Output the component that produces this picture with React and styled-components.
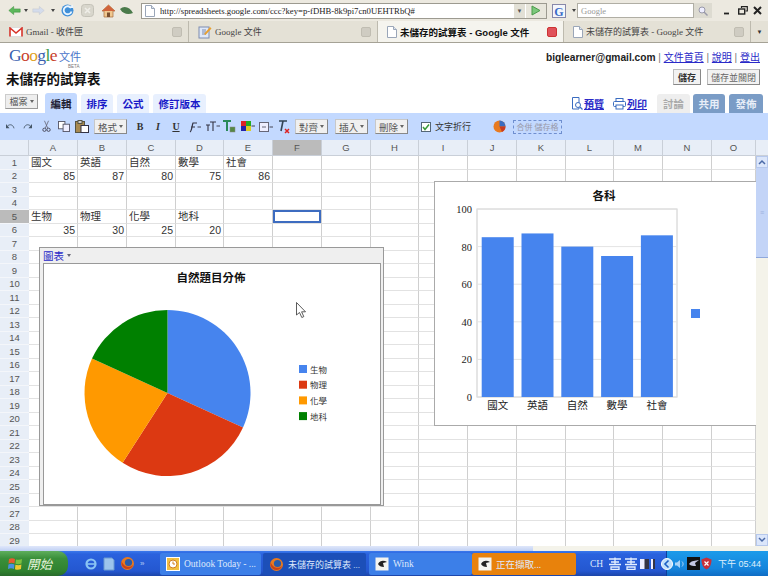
import styled, { createGlobalStyle } from "styled-components";

const CJK = `"Liberation Sans", "Noto Sans CJK TC", sans-serif`;
const SERIF_CJK = `"Liberation Serif", "Noto Sans CJK TC", serif`;

const GlobalStyle = createGlobalStyle`
    html, body { margin: 0; padding: 0; background: #fff; }
    * { box-sizing: border-box; }
    body { font-family: ${CJK}; }
`;

const COLUMNS = [
    ["A", 49], ["B", 49], ["C", 49], ["D", 48], ["E", 49], ["F", 49], ["G", 49], ["H", 48],
    ["I", 49], ["J", 49], ["K", 49], ["L", 48], ["M", 49], ["N", 49], ["O", 44],
];

const CELLS = {
    "1": ["國文", "英語", "自然", "數學", "社會"],
    "2": [85, 87, 80, 75, 86],
    "5": ["生物", "物理", "化學", "地科"],
    "6": [35, 30, 25, 20],
};

const PIE = [
    ["生物", 35, "#4684ee"],
    ["物理", 30, "#dc3912"],
    ["化學", 25, "#ff9900"],
    ["地科", 20, "#008000"],
];

const BARS = [["國文", 85], ["英語", 87], ["自然", 80], ["數學", 75], ["社會", 86]];

// Browser chrome
const Page = styled.div`
    width: 768px;
    height: 576px;
    display: flex;
    flex-direction: column;
    overflow: hidden;
    position: relative;
    background: #fff;
`;

const NavBar = styled.div`
    height: 21px;
    display: flex;
    align-items: center;
    background: #ece9e0;
    padding-left: 5px;
`;

const NavIcon = styled.span`
    display: flex;
    align-items: center;
    justify-content: center;
    width: ${(p) => p.$w || 18}px;
    height: 16px;
    flex: none;
`;

const UrlBox = styled.div`
    width: 406px;
    height: 16px;
    margin-left: 6px;
    display: flex;
    align-items: center;
    flex: none;
    background: #fff;
    border: 1px solid #9c9a90;
`;

const UrlText = styled.span`
    flex: 1;
    margin-left: 2px;
    font: 8.7px "Liberation Serif", serif;
    color: #222;
    white-space: nowrap;
    overflow: hidden;
`;

const UrlDrop = styled.span`
    width: 11px;
    height: 14px;
    display: flex;
    align-items: center;
    justify-content: center;
    background: #e2e0d6;
    font-size: 6px;
    color: #555;
    margin-right: 1px;
`;

const GoButton = styled.span`
    width: 20px;
    height: 14px;
    display: flex;
    align-items: center;
    justify-content: center;
    background: #e8e6dc;
`;

const SearchBox = styled.div`
    width: 117px;
    height: 15px;
    display: flex;
    align-items: center;
    flex: none;
    padding-left: 3px;
    background: #fff;
    border: 1px solid #b0aea4;
    font: 8.5px "Liberation Serif", serif;
    color: #999;
`;

const SearchGo = styled.span`
    width: 18px;
    height: 15px;
    display: flex;
    align-items: center;
    justify-content: center;
    flex: none;
    background: #dddbd1;
    margin-right: 8px;
`;

const WinControl = styled.span`
    width: 15px;
    display: flex;
    align-items: center;
    justify-content: center;
    flex: none;
`;

const TabBar = styled.div`
    height: 22px;
    display: flex;
    background: #e4e1d6;
    border-bottom: 1px solid #a5a296;
`;

const BrowserTab = styled.div`
    width: ${(p) => p.$w}px;
    flex: none;
    display: flex;
    align-items: center;
    padding: 0 6px 0 9px;
    gap: 3px;
    font: ${(p) => (p.$active ? `700 9.5px ${CJK}` : `9px ${SERIF_CJK}`)};
    color: ${(p) => (p.$active ? "#111" : "#444")};
    background: ${(p) => (p.$active ? "#f5f4ee" : "#e4e1d6")};
    border-right: 1px solid #bdbaae;
    white-space: nowrap;
    span:first-of-type { flex: 1; }
`;

const TabClose = styled.span`
    width: 10px;
    height: 10px;
    border-radius: 2px;
    background: ${(p) => (p.$active ? "#e0525a" : "#cfccc2")};
    border: 1px solid ${(p) => (p.$active ? "#c33" : "#c0bdb2")};
`;

const TabOverflow = styled.div`
    flex: 1;
    display: flex;
    align-items: center;
    justify-content: center;
    font-size: 6px;
    color: #333;
`;

// Docs header
const Header = styled.div`
    height: 50px;
    display: flex;
    justify-content: space-between;
    padding: 2px 8px 0 6px;
`;

const Logo = styled.div`
    display: flex;
    align-items: baseline;
    padding-left: 3px;
    position: relative;
    height: 22px;
    font: 17.5px "Liberation Serif", serif;
    letter-spacing: -0.6px;
`;

const LogoLetter = styled.span`
    color: ${(p) => p.$c};
`;

const LogoSuffix = styled.span`
    margin-left: 2px;
    font: 11px ${CJK};
    letter-spacing: 0;
    color: #4a74c9;
`;

const LogoBeta = styled.span`
    position: absolute;
    left: 62px;
    top: 19px;
    font: 4.5px "Liberation Sans", sans-serif;
    letter-spacing: 0;
    color: #777;
`;

const DocTitle = styled.div`
    margin-top: 1px;
    font-size: 13.5px;
    font-weight: 700;
    color: #111;
`;

const HeaderRight = styled.div`
    display: flex;
    flex-direction: column;
    align-items: flex-end;
`;

const UserLine = styled.div`
    margin-top: 4px;
    font-size: 10px;
    color: #777;
    white-space: nowrap;
    b { color: #222; font-size: 10.2px; }
`;

const Link = styled.a`
    color: #2a2ac8;
    text-decoration: underline;
`;

const SaveRow = styled.div`
    margin-top: 5px;
    display: flex;
    gap: 6px;
`;

const SaveButton = styled.div`
    height: 16px;
    padding: 0 ${(p) => p.$pad || 3}px;
    display: flex;
    align-items: center;
    font-size: 9px;
    font-weight: ${(p) => (p.$strong ? 700 : 400)};
    color: ${(p) => (p.$strong ? "#333" : "#666")};
    background: #f2f2f2;
    border: 1px solid #bbb;
    border-right-color: #888;
    border-bottom-color: #888;
`;

// Tab row
const TabRow = styled.div`
    height: 20px;
    display: flex;
    align-items: flex-end;
    padding-left: 5px;
`;

const FileMenu = styled.div`
    width: 33px;
    height: 15px;
    margin: 0 7px 4px 0;
    display: flex;
    align-items: center;
    justify-content: center;
    gap: 2px;
    font-size: 9px;
    color: #555;
    background: #eee;
    border: 1px solid #ccc;
    border-right-color: #999;
    border-bottom-color: #999;
`;

const Caret = styled.i`
    width: 0;
    height: 0;
    border: 2.5px solid transparent;
    border-top: 3px solid ${(p) => p.$c || "#666"};
    border-bottom: 0;
`;

const EditTab = styled.div`
    width: ${(p) => p.$w || 32}px;
    height: ${(p) => (p.$active ? 20 : 19)}px;
    margin-right: 4px;
    display: flex;
    align-items: center;
    justify-content: center;
    font-size: 10.5px;
    font-weight: 700;
    color: ${(p) => (p.$active ? "#223" : "#1a1ac8")};
    background: ${(p) => (p.$active ? "#c3d9ff" : "#e8f0fe")};
    border-radius: 3px 3px 0 0;
`;

const TabSpacer = styled.div`
    flex: 1;
`;

const ActionLink = styled.div`
    height: 19px;
    margin-right: 9px;
    display: flex;
    align-items: center;
    gap: 1px;
    font-size: 10px;
    font-weight: 700;
`;

const SideTab = styled.div`
    width: ${(p) => p.$w || 33}px;
    height: 19px;
    margin-left: ${(p) => p.$ml}px;
    display: flex;
    align-items: center;
    justify-content: center;
    font-size: 10.5px;
    font-weight: 700;
    color: ${(p) => (p.$muted ? "#aaa" : "#e8eef8")};
    background: ${(p) => (p.$muted ? "#eee" : "#7a9cc6")};
    border-radius: 3px 3px 0 0;
`;

const TabEnd = styled.div`
    width: 5px;
`;

// Format toolbar
const Toolbar = styled.div`
    height: 27px;
    display: flex;
    align-items: center;
    padding-left: 1px;
    background: #c3d9ff;
`;

const ToolIcon = styled.span`
    width: 18px;
    height: 18px;
    margin-left: ${(p) => p.$ml || 0}px;
    display: flex;
    align-items: center;
    justify-content: center;
    flex: none;
    font: 700 10px "Liberation Serif", serif;
    color: #333;
`;

const ToolMenu = styled.div`
    width: 33px;
    height: 15px;
    margin-left: ${(p) => p.$ml}px;
    display: flex;
    align-items: center;
    justify-content: center;
    gap: 2px;
    font-size: 9.5px;
    color: #555;
    background: #f0f0f0;
    border: 1px solid #c8c8c8;
    border-right-color: #888;
    border-bottom-color: #888;
    flex: none;
`;

const Wrap = styled.label`
    margin-left: 13px;
    display: flex;
    align-items: center;
    gap: 4px;
    font-size: 9px;
    color: #333;
`;

const CheckBox = styled.span`
    width: 10px;
    height: 10px;
    display: flex;
    align-items: center;
    justify-content: center;
    background: #fff;
    border: 1px solid #567;
`;

const MergeCells = styled.div`
    margin-left: 5px;
    width: 49px;
    height: 14px;
    display: flex;
    align-items: center;
    justify-content: center;
    font-size: 8px;
    color: #99a;
    border: 1px dashed #6f8fd0;
`;

// Sheet
const ColumnBar = styled.div`
    height: 16px;
    display: flex;
    background: #e8eef7;
    border-bottom: 1px solid #c9cfd8;
`;

const Corner = styled.div`
    width: 29px;
    flex: none;
    border-right: 1px solid #c9cfd8;
`;

const ColumnHead = styled.div`
    width: ${(p) => p.$w}px;
    flex: none;
    display: flex;
    align-items: center;
    justify-content: center;
    font-size: 9.5px;
    color: #555;
    background: ${(p) => (p.$on ? "#bbb" : "transparent")};
    border-right: 1px solid #c9cfd8;
`;

const SheetArea = styled.div`
    height: 390px;
    display: flex;
    position: relative;
`;

const SheetGrid = styled.div`
    width: 756px;
    display: grid;
    grid-template-columns: 29px ${COLUMNS.map((c) => `${c[1]}px`).join(" ")};
    grid-auto-rows: 13.5px;
    overflow: hidden;
`;

const RowHead = styled.div`
    display: flex;
    align-items: center;
    justify-content: center;
    font-size: 9.5px;
    color: #555;
    background: ${(p) => (p.$on ? "#bbb" : "#e8eef7")};
    border-bottom: 1px solid #f4f6fa;
`;

const Cell = styled.div`
    padding: 0 2px;
    display: flex;
    align-items: center;
    justify-content: ${(p) => (p.$num ? "flex-end" : "flex-start")};
    font-size: 10.5px;
    line-height: 1;
    color: #333;
    white-space: nowrap;
    border-right: 1px solid #cfcfcf;
    border-bottom: 1px solid #e2e2e2;
    box-shadow: ${(p) => (p.$selected ? "inset 0 0 0 2px #3d6cc0" : "none")};
`;

const VScroll = styled.div`
    width: 12px;
    display: flex;
    flex-direction: column;
    background: #f4f3ea;
`;

const ScrollButton = styled.div`
    height: 12px;
    display: flex;
    align-items: center;
    justify-content: center;
    background: #dbe6fb;
    border: 1px solid #b6c8ec;
`;

const ScrollThumb = styled.div`
    height: 90px;
    display: flex;
    align-items: center;
    justify-content: center;
    background: #c3d4f7;
    border-bottom: 1px solid #8fa8dc;
    color: #9db2de;
    font-size: 7px;
`;

const ScrollTrack = styled.div`
    flex: 1;
`;

const HScroll = styled.div`
    height: 5px;
    display: flex;
    background: #f4f3ea;
`;

const HThumb = styled.div`
    width: 533px;
    background: linear-gradient(#dfe7fa, #c0d0f4);
`;

// Charts lying over the sheet
const PieWindow = styled.div`
    position: absolute;
    left: 39px;
    top: 91px;
    width: 345px;
    height: 259px;
    display: flex;
    flex-direction: column;
    padding: 0 2px 1px 3px;
    background: #efefef;
    border: 1px solid #999;
`;

const PieTitleBar = styled.div`
    height: 15px;
    display: flex;
    align-items: center;
    gap: 3px;
    font-size: 10.5px;
    color: #2a2ac8;
`;

const PieBody = styled.div`
    flex: 1;
    background: #fff;
    border: 1px solid #999;
`;

const BarWindow = styled.div`
    position: absolute;
    left: 434px;
    top: 25px;
    width: 322px;
    height: 245px;
    background: #fff;
    border: 1px solid #aaa;
    border-right: 0;
`;

const Cursor = styled.svg`
    position: absolute;
    left: 296px;
    top: 146px;
`;

// Taskbar
const TaskBar = styled.div`
    height: 25px;
    display: flex;
    align-items: stretch;
    background: linear-gradient(#3a79ec 0, #2a62de 12%, #2457d0 80%, #1c45a8 100%);
`;

const StartButton = styled.div`
    width: 68px;
    flex: none;
    display: flex;
    align-items: center;
    gap: 4px;
    padding-left: 8px;
    font: italic 12.5px ${CJK};
    color: #e6f4dc;
    background: linear-gradient(#5fae5c, #3a8f3a 30%, #2f812f 80%, #286b2b);
    border-radius: 0 10px 10px 0;
`;

const QuickLaunch = styled.div`
    width: 92px;
    flex: none;
    display: flex;
    align-items: center;
    gap: 5px;
    padding-left: 16px;
    color: #b8cdf5;
    font-size: 8px;
`;

const TaskButton = styled.div`
    width: ${(p) => p.$w}px;
    flex: none;
    margin: 2px ${(p) => p.$mr || 0}px 1px 0;
    padding-left: 6px;
    display: flex;
    align-items: center;
    gap: 4px;
    font: ${(p) => p.$fs || 9.5}px ${SERIF_CJK};
    color: #dfe9fb;
    white-space: nowrap;
    overflow: hidden;
    border-radius: 2px;
    background: ${(p) => p.$bg};
`;

const TrayLang = styled.div`
    margin-left: 14px;
    width: 76px;
    flex: none;
    display: flex;
    align-items: center;
    gap: 2px;
    font: 9.5px "Liberation Serif", serif;
    color: #dfe9fb;
`;

const LangCode = styled.span`
    width: 16px;
`;

const Tray = styled.div`
    flex: 1;
    display: flex;
    align-items: center;
    gap: 1px;
    background: linear-gradient(#1c9bea, #1585dc 70%, #0f6cc4);
    border-left: 1px solid #0f3f9a;
`;

const CollapseSlot = styled.span`
    display: flex;
    margin-left: -6px;
`;

const Clock = styled.span`
    margin-left: 5px;
    font-size: 9px;
    color: #dfeefb;
    white-space: nowrap;
`;

// Icons
const Arrow = ({ color, flip }) => (
    <svg width="13" height="11" viewBox="0 0 16 12" style={flip ? { transform: "scaleX(-1)" } : undefined}>
        <path d="M1 6 L7 1 V4 H15 V8 H7 V11 Z" fill={color} stroke={color === "#5cb85c" ? "#3a8a3a" : "#c0c4d0"} strokeWidth="0.6" />
    </svg>
);

const Chevron = () => <Caret $c="#444" />;

const Reload = () => (
    <svg width="15" height="15" viewBox="0 0 15 15">
        <circle cx="7.5" cy="7.5" r="6" fill="#3f8fd8" />
        <path d="M11 5 A4 4 0 1 0 11.5 8.5" fill="none" stroke="#e8f4ff" strokeWidth="1.8" />
        <path d="M9 5 H13 V1.5 Z" fill="#e8f4ff" />
    </svg>
);

const Stop = () => (
    <svg width="13" height="13" viewBox="0 0 13 13">
        <rect x="0.5" y="0.5" width="12" height="12" rx="3" fill="#d8d6cc" stroke="#c4c2b8" />
        <path d="M4 4 L9 9 M9 4 L4 9" stroke="#efeee8" strokeWidth="1.6" />
    </svg>
);

const Home = () => (
    <svg width="15" height="14" viewBox="0 0 15 14">
        <path d="M7.5 1 L14 7 H12 V13 H3 V7 H1 Z" fill="#f0c890" stroke="#a86a3a" strokeWidth="0.7" />
        <path d="M7.5 1 L14 7 H1 Z" fill="#d0643c" />
        <rect x="6" y="8.5" width="3" height="4.5" fill="#7a5030" />
    </svg>
);

const Leaf = () => (
    <svg width="15" height="10" viewBox="0 0 15 10">
        <path d="M1 3 C5 -1 11 1 14 7 C9 9 4 8 1 3 Z" fill="#4a7a4a" />
    </svg>
);

const PageGlyph = () => (
    <svg width="10" height="12" viewBox="0 0 10 12">
        <path d="M0.5 0.5 H6.5 L9.5 3.5 V11.5 H0.5 Z" fill="#fff" stroke="#9aa6b8" />
        <path d="M6.5 0.5 V3.5 H9.5" fill="#dde4ee" stroke="#9aa6b8" />
    </svg>
);

const Minimize = () => (
    <svg width="9" height="9" viewBox="0 0 9 9"><path d="M1 7.5 H6" stroke="#222" strokeWidth="1.8" /></svg>
);

const Restore = () => (
    <svg width="10" height="9" viewBox="0 0 10 9">
        <path d="M3.5 2 V0.7 H9.3 V5 H7.5" fill="none" stroke="#222" strokeWidth="1.2" />
        <rect x="0.7" y="3" width="6" height="5" fill="none" stroke="#222" strokeWidth="1.4" />
    </svg>
);

const CloseX = () => (
    <svg width="9" height="9" viewBox="0 0 9 9"><path d="M1 1 L8 8 M8 1 L1 8" stroke="#222" strokeWidth="2" /></svg>
);

const GmailGlyph = () => (
    <svg width="14" height="10" viewBox="0 0 14 10">
        <rect x="0.5" y="0.5" width="13" height="9" fill="#fff" stroke="#ddd" />
        <path d="M1 9.5 V1 L7 6 L13 1 V9.5" fill="none" stroke="#d8352a" strokeWidth="1.6" />
    </svg>
);

const DocsGlyph = () => (
    <svg width="14" height="14" viewBox="0 0 14 14">
        <rect x="1" y="2" width="10" height="11" fill="#dfe8f8" stroke="#7c8cb0" />
        <path d="M4 5 H8 M4 7 H8 M4 9 H8" stroke="#7c8cb0" />
        <path d="M6 9 L12 2 L13.5 3.5 L7.5 10 Z" fill="#e8a030" />
    </svg>
);

const Undo = ({ flip }) => (
    <svg width="10" height="8" viewBox="0 0 11 9" style={flip ? { transform: "scaleX(-1)" } : undefined}>
        <path d="M3 3 C6 1 9 2 10 6" fill="none" stroke="#456" strokeWidth="1" />
        <path d="M1 1 V6 H5 Z" fill="#456" />
    </svg>
);

const Cut = () => (
    <svg width="9" height="13" viewBox="0 0 11 14">
        <path d="M3 0 L7 9 M8 0 L4 9" stroke="#667" strokeWidth="1" />
        <circle cx="3" cy="11" r="2" fill="none" stroke="#445" strokeWidth="1.1" />
        <circle cx="8" cy="11" r="2" fill="none" stroke="#445" strokeWidth="1.1" />
    </svg>
);

const Copy = () => (
    <svg width="12" height="11" viewBox="0 0 13 12">
        <rect x="0.5" y="0.5" width="7" height="8" fill="#fff" stroke="#556" />
        <rect x="5.5" y="3.5" width="7" height="8" fill="#eef" stroke="#556" />
    </svg>
);

const Paste = () => (
    <svg width="14" height="13" viewBox="0 0 14 13">
        <rect x="0.5" y="1.5" width="9" height="11" fill="#a88a50" stroke="#554" />
        <rect x="3" y="0.5" width="4" height="3" fill="#ccc" stroke="#554" />
        <rect x="6" y="5.5" width="7.5" height="7" fill="#fff" stroke="#334" />
    </svg>
);

const FontIcon = () => (
    <svg width="13" height="12" viewBox="0 0 13 12">
        <path d="M2 11 C4 10 4 4 5 2 H9 M3 6 H7" fill="none" stroke="#334" strokeWidth="1.2" />
        <path d="M9.5 6 H13" stroke="#445" />
    </svg>
);

const SizeIcon = () => (
    <svg width="15" height="11" viewBox="0 0 15 11">
        <path d="M1 4 H5 M3 4 V10 M5 1 H11 M8 1 V10" stroke="#334" strokeWidth="1.1" fill="none" />
        <path d="M11.5 5 H15" stroke="#445" />
    </svg>
);

const TextColor = () => (
    <svg width="14" height="13" viewBox="0 0 14 13">
        <path d="M0 1 H8 M4 1 V11" stroke="#2a8a5a" strokeWidth="2" />
        <rect x="7" y="7" width="5" height="5" fill="#584" stroke="#888" strokeWidth="0.5" />
    </svg>
);

const FillColor = () => (
    <svg width="14" height="11" viewBox="0 0 14 11">
        <rect x="0" y="0" width="5" height="5" fill="#d22" />
        <rect x="5" y="0" width="5" height="5" fill="#2a2" />
        <rect x="0" y="5" width="5" height="5" fill="#22a" />
        <rect x="5" y="5" width="5" height="5" fill="#dc2" />
        <path d="M10.5 5 H14" stroke="#445" />
    </svg>
);

const Borders = () => (
    <svg width="14" height="10" viewBox="0 0 14 10">
        <rect x="0.5" y="0.5" width="9" height="9" fill="#eef" stroke="#667" />
        <path d="M3 5 H7" stroke="#667" />
        <path d="M10.5 5 H14" stroke="#445" />
    </svg>
);

const ClearFormat = () => (
    <svg width="13" height="14" viewBox="0 0 13 14">
        <path d="M1 1 H9 M5 1 L3 11" stroke="#345" strokeWidth="1.6" />
        <path d="M7 9 L11 13 M11 9 L7 13" stroke="#d22" strokeWidth="1.5" />
    </svg>
);

const ChartBall = () => (
    <svg width="13" height="13" viewBox="0 0 13 13">
        <circle cx="6.5" cy="6.5" r="6" fill="#e87a20" />
        <path d="M6.5 6.5 V0.5 A6 6 0 0 1 12.5 6.5 Z" fill="#3a6cc0" />
        <path d="M6.5 6.5 H12.5 A6 6 0 0 1 9 12 Z" fill="#c83a20" />
    </svg>
);

const Preview = () => (
    <svg width="12" height="13" viewBox="0 0 12 13">
        <path d="M1.5 0.5 H8 V12 H1.5 Z" fill="#fff" stroke="#3a6cc0" />
        <circle cx="7" cy="8" r="2.5" fill="#fff" stroke="#3a6cc0" />
        <path d="M9 10 L11.5 12.5" stroke="#3a6cc0" strokeWidth="1.2" />
    </svg>
);

const Printer = () => (
    <svg width="13" height="12" viewBox="0 0 13 12">
        <rect x="3" y="0.5" width="7" height="3" fill="#fff" stroke="#3a6cc0" />
        <rect x="0.5" y="3.5" width="12" height="5" rx="1" fill="#fff" stroke="#3a6cc0" />
        <rect x="3" y="7" width="7" height="4" fill="#fff" stroke="#3a6cc0" />
    </svg>
);

const WinFlag = () => (
    <svg width="15" height="14" viewBox="0 0 15 14">
        <path d="M1 2 C3 1 5 1 7 2 L6.5 6.5 C4.5 5.5 2.5 5.5 0.5 6.5 Z" fill="#e85a30" />
        <path d="M8 2.4 C10 3 12 3 14 2 L13.5 6.5 C11.5 7.5 9.5 7.5 7.5 6.8 Z" fill="#7cc040" />
        <path d="M0.4 7.4 C2.5 6.5 4.5 6.5 6.4 7.4 L6 12 C4 11 2 11 0 12 Z" fill="#4a90e0" />
        <path d="M7.4 7.8 C9.5 8.4 11.5 8.4 13.4 7.5 L13 12 C11 13 9 13 7 12.2 Z" fill="#f0c830" />
    </svg>
);

const IeGlyph = () => (
    <svg width="14" height="14" viewBox="0 0 14 14">
        <circle cx="7" cy="7" r="4.5" fill="none" stroke="#8ac4f4" strokeWidth="2.2" />
        <path d="M3 7 H11" stroke="#8ac4f4" strokeWidth="1.6" />
    </svg>
);

const DesktopGlyph = () => (
    <svg width="12" height="14" viewBox="0 0 12 14">
        <path d="M1 1 H9 L11 3 V13 H1 Z" fill="#9cc4ec" stroke="#6a9ad0" />
    </svg>
);

const FoxGlyph = () => (
    <svg width="15" height="15" viewBox="0 0 15 15">
        <circle cx="7.5" cy="7.5" r="6.5" fill="#e87a20" />
        <circle cx="8.5" cy="6.5" r="3.6" fill="#2a5ca8" />
        <path d="M1.5 5 C3 10 9 13 13 9 C12 14 3 15 1.5 8 Z" fill="#c8421a" />
    </svg>
);

const OutlookGlyph = () => (
    <svg width="14" height="14" viewBox="0 0 14 14">
        <rect x="0.5" y="0.5" width="13" height="13" fill="#f0c040" stroke="#fff" />
        <circle cx="7" cy="7" r="4" fill="#fff" stroke="#d08020" />
        <path d="M7 4.5 V7 H9" fill="none" stroke="#d08020" />
    </svg>
);

const WinkGlyph = () => (
    <svg width="14" height="14" viewBox="0 0 14 14">
        <rect x="0.5" y="0.5" width="13" height="13" fill="#f4f4f0" />
        <path d="M3 7 C5 3 9 3 12 5 L8 6 L9 10 C6 10 4 9 3 7 Z" fill="#222" />
    </svg>
);

const ImeGlyph = () => (
    <svg width="14" height="13" viewBox="0 0 14 13">
        <path d="M1 2 H13 M3 5 H11 M1 7.5 H13 M3 10 H11 V12.5 H3 Z M7 0.5 V7" fill="none" stroke="#e4f0ff" strokeWidth="1.3" />
    </svg>
);

const BookGlyph = ({ w }) => (
    <svg width={w} height="10" viewBox={`0 0 ${w} 10`}>
        <rect x="0" y="0" width={w} height="10" fill="#eef" />
        <rect x={w / 2} y="0" width={w / 2} height="10" fill="#334" />
    </svg>
);

const TrayShield = () => (
    <svg width="11" height="13" viewBox="0 0 11 13">
        <path d="M5.5 0.5 L10.5 2.5 C10.5 7 9 11 5.5 12.5 C2 11 0.5 7 0.5 2.5 Z" fill="#c8303a" />
        <path d="M3.5 4.5 L7.5 8.5 M7.5 4.5 L3.5 8.5" stroke="#fff" strokeWidth="1.2" />
    </svg>
);

const TrayCollapse = () => (
    <svg width="12" height="14" viewBox="0 0 12 14">
        <circle cx="6" cy="7" r="5.5" fill="#bfe0fb" stroke="#fff" />
        <path d="M7.5 3.5 L4 7 L7.5 10.5" fill="none" stroke="#1c5fc4" strokeWidth="1.6" />
    </svg>
);

const TrayVolume = () => (
    <svg width="12" height="12" viewBox="0 0 12 12">
        <path d="M1 4.5 H3 L6 2 V10 L3 7.5 H1 Z" fill="#a8d4f8" />
        <path d="M8 3.5 C9.5 5 9.5 7 8 8.5" fill="none" stroke="#a8d4f8" />
    </svg>
);

const TrayApp = () => (
    <svg width="13" height="13" viewBox="0 0 13 13">
        <rect x="0" y="0" width="13" height="13" fill="#111" />
        <path d="M2 7 C5 3 8 4 12 3 L8 6 L9 9 C6 9 4 9 2 7 Z" fill="#c4c8e4" />
    </svg>
);

const PieChart = () => {
    const cx = 123.5;
    const cy = 129;
    const r = 83;
    const total = PIE.reduce((sum, s) => sum + s[1], 0);
    let angle = 0;
    const slices = PIE.map(([name, value, color]) => {
        const start = angle;
        angle += (value / total) * Math.PI * 2;
        const x1 = cx + r * Math.sin(start);
        const y1 = cy - r * Math.cos(start);
        const x2 = cx + r * Math.sin(angle);
        const y2 = cy - r * Math.cos(angle);
        const large = angle - start > Math.PI ? 1 : 0;
        return <path key={name} d={`M${cx} ${cy} L${x1} ${y1} A${r} ${r} 0 ${large} 1 ${x2} ${y2} Z`} fill={color} />;
    });
    return (
        <svg width="336" height="240" viewBox="0 0 336 240" style={{ display: "block" }}>
            <text x="167" y="18" textAnchor="middle" fontSize="11.5" fontWeight="700" fill="#111">自然題目分佈</text>
            {slices}
            {PIE.map(([name, , color], i) => (
                <g key={name}>
                    <rect x="255" y={101 + i * 15.7} width="8" height="8" fill={color} />
                    <text x="266" y={108.5 + i * 15.7} fontSize="8.5" fill="#333">{name}</text>
                </g>
            ))}
        </svg>
    );
};

const BarChart = () => {
    const left = 42;
    const top = 27;
    const width = 200;
    const height = 188;
    const ticks = [0, 20, 40, 60, 80, 100];
    return (
        <svg width="321" height="243" viewBox="0 0 321 243" style={{ display: "block" }}>
            <text x="169" y="18" textAnchor="middle" fontSize="11.5" fontWeight="700" fill="#111">各科</text>
            <rect x={left} y={top} width={width} height={height} fill="#fff" stroke="#ccc" />
            {ticks.map((t) => {
                const y = top + height - (t / 100) * height;
                return (
                    <g key={t}>
                        <line x1={left} x2={left + width} y1={y} y2={y} stroke="#e4e4e4" />
                        <text x={left - 5} y={y + 4} textAnchor="end" fontSize="10.5" fontFamily="Liberation Serif, serif" fill="#222">{t}</text>
                    </g>
                );
            })}
            {BARS.map(([name, value], i) => {
                const x = left + 4.7 + i * 39.8;
                const h = (value / 100) * height;
                return (
                    <g key={name}>
                        <rect x={x} y={top + height - h} width="32" height={h} fill="#4684ee" />
                        <text x={x + 16} y={top + height + 12} textAnchor="middle" fontSize="10.5" fill="#222">{name}</text>
                    </g>
                );
            })}
            <rect x="256" y="127" width="9" height="9" fill="#4684ee" />
        </svg>
    );
};

const Rows = () => {
    const rows = [];
    for (let r = 1; r <= 29; r++) {
        const data = CELLS[r] || [];
        rows.push(<RowHead key={`h${r}`} $on={r === 5}>{r}</RowHead>);
        COLUMNS.forEach(([name], c) => {
            const value = data[c];
            rows.push(
                <Cell key={`${name}${r}`} $num={typeof value === "number"} $selected={name === "F" && r === 5}>
                    {value}
                </Cell>
            );
        });
    }
    return rows;
};

const App = () => {
    return (
        <Page>
            <GlobalStyle />
            <NavBar>
                <NavIcon><Arrow color="#5cb85c" /></NavIcon>
                <NavIcon $w={6}><Chevron /></NavIcon>
                <NavIcon><Arrow color="#d4dcec" flip /></NavIcon>
                <NavIcon $w={12}><Chevron /></NavIcon>
                <NavIcon $w={16}><Reload /></NavIcon>
                <NavIcon $w={24}><Stop /></NavIcon>
                <NavIcon $w={18}><Home /></NavIcon>
                <NavIcon $w={18}><Leaf /></NavIcon>
                <UrlBox>
                    <NavIcon $w={16}><PageGlyph /></NavIcon>
                    <UrlText>http://spreadsheets.google.com/ccc?key=p-fDHB-8k9pi7cn0UEHTRbQ#</UrlText>
                    <UrlDrop>▼</UrlDrop>
                    <GoButton>
                        <svg width="10" height="11" viewBox="0 0 10 11"><path d="M1 1 L9 5.5 L1 10 Z" fill="#7cc87c" stroke="#4a9a4a" /></svg>
                    </GoButton>
                </UrlBox>
                <NavIcon $w={24}>
                    <svg width="14" height="14" viewBox="0 0 14 14">
                        <rect x="0.5" y="0.5" width="13" height="13" fill="#f4f6fb" stroke="#88a" />
                        <text x="7" y="11.5" textAnchor="middle" fontSize="12" fontWeight="700" fill="#3a6cc8" fontFamily="Liberation Serif, serif">G</text>
                    </svg>
                </NavIcon>
                <NavIcon $w={6}><Chevron /></NavIcon>
                <SearchBox>Google</SearchBox>
                <SearchGo>
                    <svg width="10" height="10" viewBox="0 0 10 10">
                        <circle cx="4" cy="4" r="3" fill="#eef" stroke="#99a" />
                        <path d="M6 6 L9.5 9.5" stroke="#99a" strokeWidth="1.4" />
                    </svg>
                </SearchGo>
                <WinControl><Minimize /></WinControl>
                <WinControl><Restore /></WinControl>
                <WinControl><CloseX /></WinControl>
            </NavBar>
            <TabBar>
                <BrowserTab $w={189}>
                    <GmailGlyph />
                    <span>Gmail - 收件匣</span>
                    <TabClose />
                </BrowserTab>
                <BrowserTab $w={189}>
                    <DocsGlyph />
                    <span>Google 文件</span>
                    <TabClose />
                </BrowserTab>
                <BrowserTab $w={186} $active>
                    <PageGlyph />
                    <span>未儲存的試算表 - Google 文件</span>
                    <TabClose $active />
                </BrowserTab>
                <BrowserTab $w={187}>
                    <PageGlyph />
                    <span>未儲存的試算表 - Google 文件</span>
                    <TabClose />
                </BrowserTab>
                <TabOverflow>▼</TabOverflow>
            </TabBar>
            <Header>
                <div>
                    <Logo>
                        <LogoLetter $c="#3a5fb0">G</LogoLetter>
                        <LogoLetter $c="#c8402a">o</LogoLetter>
                        <LogoLetter $c="#e0a020">o</LogoLetter>
                        <LogoLetter $c="#3a5fb0">g</LogoLetter>
                        <LogoLetter $c="#3a9a4a">l</LogoLetter>
                        <LogoLetter $c="#c8402a">e</LogoLetter>
                        <LogoSuffix>文件</LogoSuffix>
                        <LogoBeta>BETA</LogoBeta>
                    </Logo>
                    <DocTitle>未儲存的試算表</DocTitle>
                </div>
                <HeaderRight>
                    <UserLine>
                        <b>biglearner@gmail.com</b> | <Link>文件首頁</Link> | <Link>說明</Link> | <Link>登出</Link>
                    </UserLine>
                    <SaveRow>
                        <SaveButton $strong $pad={4}>儲存</SaveButton>
                        <SaveButton>儲存並關閉</SaveButton>
                    </SaveRow>
                </HeaderRight>
            </Header>
            <TabRow>
                <FileMenu>檔案<Caret /></FileMenu>
                <EditTab $active>編輯</EditTab>
                <EditTab>排序</EditTab>
                <EditTab>公式</EditTab>
                <EditTab $w={53}>修訂版本</EditTab>
                <TabSpacer />
                <ActionLink><Preview /><Link>預覽</Link></ActionLink>
                <ActionLink><Printer /><Link>列印</Link></ActionLink>
                <SideTab $muted $ml={1}>討論</SideTab>
                <SideTab $w={32} $ml={3}>共用</SideTab>
                <SideTab $w={34} $ml={4}>發佈</SideTab>
                <TabEnd />
            </TabRow>
            <Toolbar>
                <ToolIcon><Undo /></ToolIcon>
                <ToolIcon><Undo flip /></ToolIcon>
                <ToolIcon><Cut /></ToolIcon>
                <ToolIcon><Copy /></ToolIcon>
                <ToolIcon><Paste /></ToolIcon>
                <ToolMenu $ml={3}>格式<Caret /></ToolMenu>
                <ToolIcon $ml={4}>B</ToolIcon>
                <ToolIcon><i>I</i></ToolIcon>
                <ToolIcon><u>U</u></ToolIcon>
                <ToolIcon><FontIcon /></ToolIcon>
                <ToolIcon><SizeIcon /></ToolIcon>
                <ToolIcon><TextColor /></ToolIcon>
                <ToolIcon><FillColor /></ToolIcon>
                <ToolIcon><Borders /></ToolIcon>
                <ToolIcon><ClearFormat /></ToolIcon>
                <ToolMenu $ml={2}>對齊<Caret /></ToolMenu>
                <ToolMenu $ml={7}>插入<Caret /></ToolMenu>
                <ToolMenu $ml={7}>刪除<Caret /></ToolMenu>
                <Wrap>
                    <CheckBox>
                        <svg width="8" height="8" viewBox="0 0 8 8"><path d="M1 4 L3 6.5 L7 1.5" fill="none" stroke="#3a9a3a" strokeWidth="1.5" /></svg>
                    </CheckBox>
                    文字折行
                </Wrap>
                <ToolIcon $ml={19}><ChartBall /></ToolIcon>
                <MergeCells>合併 儲存格</MergeCells>
            </Toolbar>
            <ColumnBar>
                <Corner />
                {COLUMNS.map(([name, w]) => (
                    <ColumnHead key={name} $w={w} $on={name === "F"}>{name}</ColumnHead>
                ))}
            </ColumnBar>
            <SheetArea>
                <SheetGrid><Rows /></SheetGrid>
                <VScroll>
                    <ScrollButton>
                        <svg width="8" height="6" viewBox="0 0 8 6"><path d="M1 5 L4 2 L7 5" fill="none" stroke="#4a6aa8" strokeWidth="1.5" /></svg>
                    </ScrollButton>
                    <ScrollThumb>≡</ScrollThumb>
                    <ScrollTrack />
                    <ScrollButton>
                        <svg width="8" height="6" viewBox="0 0 8 6"><path d="M1 1 L4 4 L7 1" fill="none" stroke="#4a6aa8" strokeWidth="1.5" /></svg>
                    </ScrollButton>
                </VScroll>
                <PieWindow>
                    <PieTitleBar>圖表<Caret $c="#667" /></PieTitleBar>
                    <PieBody><PieChart /></PieBody>
                </PieWindow>
                <BarWindow><BarChart /></BarWindow>
                <Cursor width="11" height="17" viewBox="0 0 11 17">
                    <path d="M0.5 0.5 V13 L3.5 10.5 L5.8 15.5 L7.8 14.6 L5.6 9.8 H9.5 Z" fill="#fff" stroke="#333" strokeWidth="0.8" />
                </Cursor>
            </SheetArea>
            <HScroll><HThumb /></HScroll>
            <TaskBar>
                <StartButton><WinFlag />開始</StartButton>
                <QuickLaunch>
                    <IeGlyph />
                    <DesktopGlyph />
                    <FoxGlyph />
                    »
                </QuickLaunch>
                <TaskButton $w={101} $mr={2} $bg="#3c7fe8"><OutlookGlyph />Outlook Today - ...</TaskButton>
                <TaskButton $w={103} $mr={3} $bg="#1c4fb8" $fs={9}><FoxGlyph />未儲存的試算表 ...</TaskButton>
                <TaskButton $w={103} $bg="#3c7fe8"><WinkGlyph />Wink</TaskButton>
                <TaskButton $w={104} $bg="#e8820c"><WinkGlyph />正在擷取...</TaskButton>
                <TrayLang>
                    <LangCode>CH</LangCode>
                    <ImeGlyph />
                    <ImeGlyph />
                    <BookGlyph w={9} />
                    <BookGlyph w={4} />
                </TrayLang>
                <Tray>
                    <CollapseSlot><TrayCollapse /></CollapseSlot>
                    <TrayVolume />
                    <TrayApp />
                    <TrayShield />
                    <Clock>下午 05:44</Clock>
                </Tray>
            </TaskBar>
        </Page>
    );
};

export default App;
